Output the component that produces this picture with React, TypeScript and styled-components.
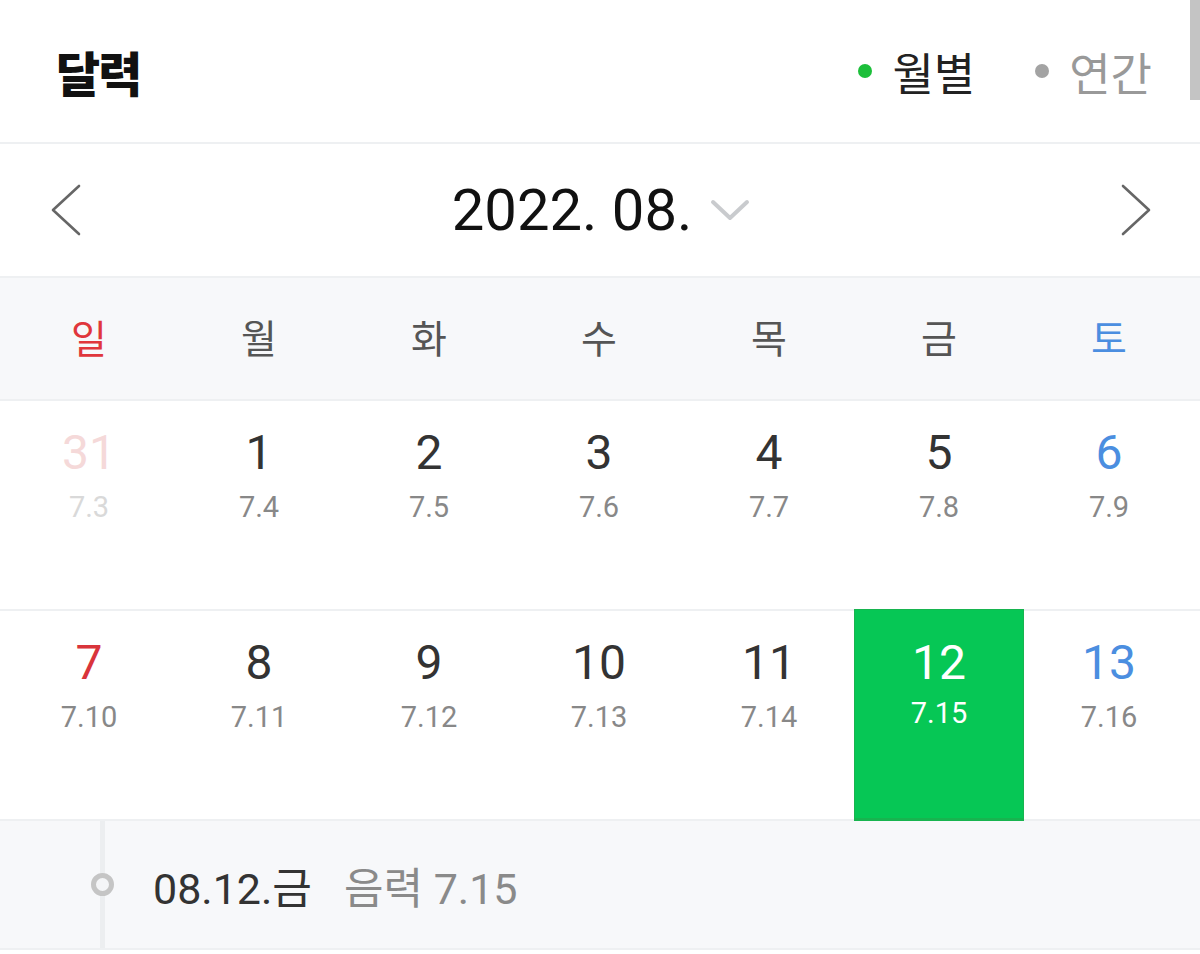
import styled, { createGlobalStyle } from "styled-components";

const GlobalStyle = createGlobalStyle`
  html, body {
    margin: 0;
    padding: 0;
    background: #ffffff;
  }
  body {
    font-family: Roboto, "Noto Sans CJK KR", sans-serif;
    color: #333;
  }
`;

const Page = styled.div`
  position: relative;
  width: 1200px;
  height: 954px;
  overflow: hidden;
  background: #fff;
`;

const ScrollThumb = styled.div`
  position: absolute;
  top: 0;
  right: 0;
  width: 10px;
  height: 100px;
  background: #c4c4c4;
`;

const Header = styled.header`
  height: 142px;
  display: flex;
  align-items: center;
  justify-content: space-between;
  padding: 0 48px 0 56px;
  border-bottom: 2px solid #eef0f2;
`;

const Title = styled.h1`
  margin: 0;
  font-family: "Noto Sans CJK KR", sans-serif;
  font-size: 48px;
  font-weight: 900;
  color: #111;
  letter-spacing: -2px;
`;

const Tabs = styled.div`
  display: flex;
  align-items: center;
  gap: 60px;
`;

const Tab = styled.div<{ $active?: boolean }>`
  display: flex;
  align-items: center;
  gap: 20px;
  font-family: "Noto Sans CJK KR", sans-serif;
  font-size: 45px;
  color: ${(p) => (p.$active ? "#222" : "#999")};
  &::before {
    content: "";
    width: 14px;
    height: 14px;
    border-radius: 50%;
    background: ${(p) => (p.$active ? "#1cbf3a" : "#a3a3a3")};
  }
`;

const Nav = styled.div`
  height: 132px;
  display: flex;
  align-items: center;
  justify-content: space-between;
  padding: 0 48px 0 50px;
  border-bottom: 2px solid #eef0f2;
`;

const MonthPicker = styled.div`
  display: flex;
  align-items: center;
  gap: 18px;
  font-size: 58px;
  color: #111;
`;

const WeekHeader = styled.div`
  height: 123px;
  box-sizing: border-box;
  display: grid;
  grid-template-columns: repeat(7, 1fr);
  align-items: center;
  padding: 0 6px 6px 4px;
  background: #f7f8fa;
  border-bottom: 2px solid #eef0f2;
`;

const WeekDay = styled.div<{ $color: string }>`
  text-align: center;
  font-family: "Noto Sans CJK KR", sans-serif;
  font-size: 39px;
  color: ${(p) => p.$color};
`;

const WeekRow = styled.div`
  height: 208px;
  display: grid;
  grid-template-columns: repeat(7, 1fr);
  padding: 0 6px 0 4px;
  border-bottom: 2px solid #eef0f2;
`;

const DayCell = styled.div<{ $selected?: boolean }>`
  display: flex;
  flex-direction: column;
  align-items: center;
  background: ${(p) => (p.$selected ? "#06c755" : "transparent")};
  box-shadow: ${(p) => (p.$selected ? "inset 0 0 0 1px #17b44f, 0 2px 0 #17b44f" : "none")};
  margin-top: ${(p) => (p.$selected ? "-2px" : "0")};
  padding-top: ${(p) => (p.$selected ? "30px" : "28px")};
`;

const DayNum = styled.div<{ $color: string }>`
  font-size: 48px;
  line-height: 1;
  color: ${(p) => p.$color};
`;

const Lunar = styled.div<{ $color: string; $tight?: boolean }>`
  margin-top: ${(p) => (p.$tight ? "12px" : "16px")};
  font-size: 29px;
  line-height: 1;
  color: ${(p) => p.$color};
`;

const Footer = styled.div`
  height: 127px;
  display: flex;
  align-items: center;
  padding-left: 91px;
  background: #f7f8fa;
  border-bottom: 2px solid #eef0f2;
`;

const Timeline = styled.div`
  position: relative;
  width: 23px;
  height: 100%;
  display: flex;
  align-items: center;
  justify-content: center;
  &::before {
    content: "";
    position: absolute;
    top: 0;
    bottom: 0;
    left: 9px;
    width: 5px;
    background: #eceef0;
  }
`;

const Dot = styled.div`
  position: relative;
  width: 13px;
  height: 13px;
  border-radius: 50%;
  border: 5px solid #c5c5c5;
  background: #f4f5f7;
`;

const FooterDate = styled.span`
  margin-left: 39px;
  font-size: 43px;
  color: #333;
`;

const FooterLunar = styled.span`
  margin-left: 32px;
  font-size: 43px;
  color: #8a8a8a;
`;

type Day = { n: number; lunar: string; kind?: "faded" | "sun" | "sat"; selected?: boolean };

const weekdays = [
  { label: "일", color: "#e0363c" },
  { label: "월", color: "#555" },
  { label: "화", color: "#555" },
  { label: "수", color: "#555" },
  { label: "목", color: "#555" },
  { label: "금", color: "#555" },
  { label: "토", color: "#4b8ee0" },
];

const weeks: Day[][] = [
  [
    { n: 31, lunar: "7.3", kind: "faded" },
    { n: 1, lunar: "7.4" },
    { n: 2, lunar: "7.5" },
    { n: 3, lunar: "7.6" },
    { n: 4, lunar: "7.7" },
    { n: 5, lunar: "7.8" },
    { n: 6, lunar: "7.9", kind: "sat" },
  ],
  [
    { n: 7, lunar: "7.10", kind: "sun" },
    { n: 8, lunar: "7.11" },
    { n: 9, lunar: "7.12" },
    { n: 10, lunar: "7.13" },
    { n: 11, lunar: "7.14" },
    { n: 12, lunar: "7.15", selected: true },
    { n: 13, lunar: "7.16", kind: "sat" },
  ],
];

function numColor(d: Day) {
  if (d.selected) return "#fff";
  if (d.kind === "faded") return "#f5d9d9";
  if (d.kind === "sun") return "#d9343b";
  if (d.kind === "sat") return "#4b8ee0";
  return "#333";
}

function lunarColor(d: Day) {
  if (d.selected) return "#fff";
  if (d.kind === "faded") return "#d9d9d9";
  return "#888";
}

function App() {
  return (
    <Page>
      <GlobalStyle />
      <Header>
        <Title>달력</Title>
        <Tabs>
          <Tab $active>월별</Tab>
          <Tab>연간</Tab>
        </Tabs>
      </Header>
      <Nav>
        <svg width="32" height="52" viewBox="0 0 32 52">
          <polyline points="29,2 3,26 29,50" fill="none" stroke="#666" strokeWidth="2.6" strokeLinecap="round" strokeLinejoin="round" />
        </svg>
        <MonthPicker>
          <span>2022. 08.</span>
          <svg width="40" height="24" viewBox="0 0 40 24">
            <polyline points="3,4 20,20 37,4" fill="none" stroke="#c9cbce" strokeWidth="4" strokeLinecap="round" strokeLinejoin="round" />
          </svg>
        </MonthPicker>
        <svg width="32" height="52" viewBox="0 0 32 52">
          <polyline points="3,2 29,26 3,50" fill="none" stroke="#666" strokeWidth="2.6" strokeLinecap="round" strokeLinejoin="round" />
        </svg>
      </Nav>
      <WeekHeader>
        {weekdays.map((w) => (
          <WeekDay key={w.label} $color={w.color}>
            {w.label}
          </WeekDay>
        ))}
      </WeekHeader>
      {weeks.map((week, i) => (
        <WeekRow key={i}>
          {week.map((d) => (
            <DayCell key={d.n} $selected={d.selected}>
              <DayNum $color={numColor(d)}>{d.n}</DayNum>
              <Lunar $color={lunarColor(d)} $tight={d.selected}>
                {d.lunar}
              </Lunar>
            </DayCell>
          ))}
        </WeekRow>
      ))}
      <Footer>
        <Timeline>
          <Dot />
        </Timeline>
        <FooterDate>08.12.금</FooterDate>
        <FooterLunar>음력 7.15</FooterLunar>
      </Footer>
      <ScrollThumb />
    </Page>
  );
}

export default App;
